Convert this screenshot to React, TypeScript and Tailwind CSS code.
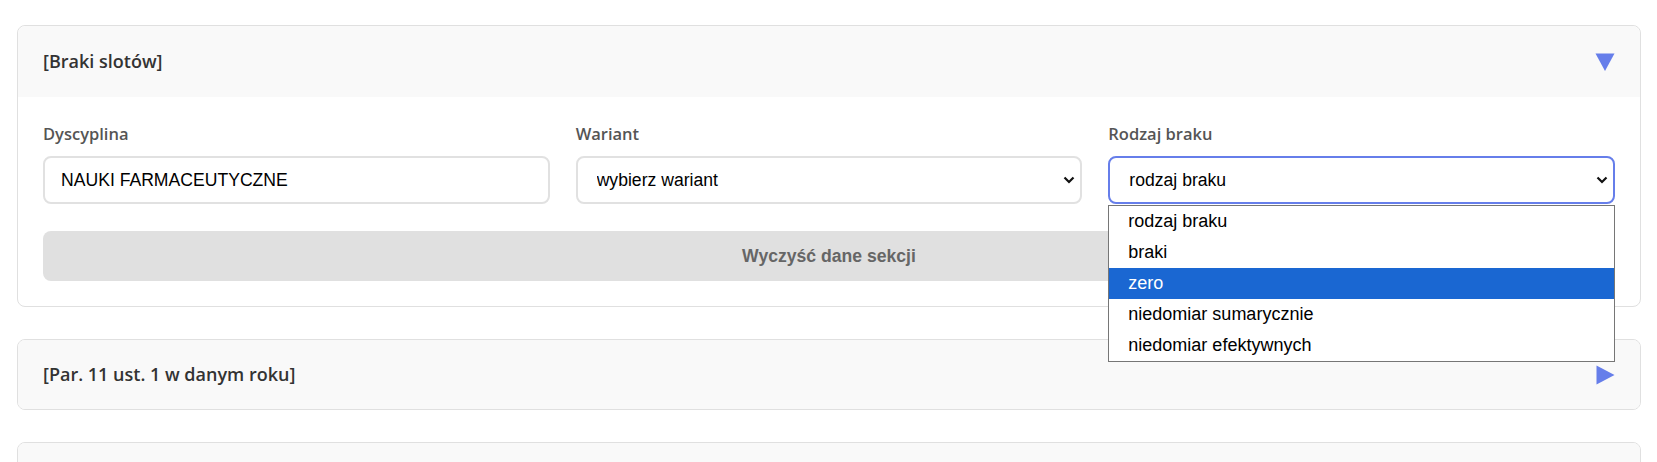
import React from "react";

const options = [
  "rodzaj braku",
  "braki",
  "zero",
  "niedomiar sumarycznie",
  "niedomiar efektywnych",
];

const arial = { fontFamily: '"Liberation Sans", Arial, sans-serif' };

// Strzałka natywnego selecta
function Chevron() {
  return (
    <svg
      className="pointer-events-none absolute right-[7px] top-1/2 -translate-y-1/2"
      width="12"
      height="8"
      viewBox="0 0 12 8"
    >
      <path d="M1.5 1.5 L6 6 L10.5 1.5" fill="none" stroke="#111" strokeWidth="2.2" />
    </svg>
  );
}

function Field({
  label,
  children,
}: {
  label: string;
  children: React.ReactNode;
}) {
  return (
    <div className="flex flex-col">
      <label className="mb-[10px] h-6 text-[16.5px] font-semibold leading-6 text-[#555]">
        {label}
      </label>
      {children}
    </div>
  );
}

function SectionHeader({
  title,
  open,
  h,
}: {
  title: string;
  open: boolean;
  h: string;
}) {
  return (
    <div className={"flex items-center justify-between bg-[#f9f9f9] px-[25px] " + h}>
      <h3 className="text-[18px] font-semibold text-[#333]">{title}</h3>
      {open ? (
        <svg width="20" height="18" viewBox="0 0 20 18">
          <polygon points="0.5,0.5 19.5,0.5 10,18" fill="#667eea" />
        </svg>
      ) : (
        <svg width="19" height="20" viewBox="0 0 19 20">
          <polygon points="0.5,0.5 18.5,10 0.5,19.5" fill="#667eea" />
        </svg>
      )}
    </div>
  );
}

export default function App() {
  const inputCls =
    "h-[48px] w-full rounded-lg border-2 border-[#e1e1e1] bg-white px-4 text-[17.6px] text-black outline-none";

  return (
    <div
      className="h-[462px] overflow-hidden bg-white pl-[17px] pr-4 pt-[25px]"
      style={{ fontFamily: '"Open Sans", "Noto Sans", sans-serif' }}
    >
      {/* Sekcja: braki slotów */}
      <div className="mb-8 rounded-lg border border-[#e0e0e0] bg-white">
        <div className="overflow-hidden rounded-t-lg">
          <SectionHeader title="[Braki slotów]" open h="h-[71px]" />
        </div>
        <div className="px-[25px] pb-[25px] pt-[25px]">
          <div className="grid grid-cols-3 gap-[26px]">
            <Field label="Dyscyplina">
              <input
                className={inputCls}
                style={arial}
                defaultValue="NAUKI FARMACEUTYCZNE"
                readOnly
              />
            </Field>
            <Field label="Wariant">
              <div className="relative">
                <select
                  className={inputCls + " appearance-none pl-[19px]"}
                  style={arial}
                  defaultValue=""
                >
                  <option value="">wybierz wariant</option>
                </select>
                <Chevron />
              </div>
            </Field>
            <Field label="Rodzaj braku">
              <div className="relative">
                <select
                  className="h-[48px] w-full appearance-none rounded-lg border-2 border-[#667eea] bg-white pl-[19px] text-[17.6px] text-black outline-none"
                  style={arial}
                  defaultValue="rodzaj braku"
                >
                  {options.map((o) => (
                    <option key={o}>{o}</option>
                  ))}
                </select>
                <Chevron />
                {/* rozwinięta lista */}
                <ul
                  className="absolute left-0 right-0 top-full z-10 mt-px border border-[#767676] bg-white"
                  style={arial}
                >
                  {options.map((o) => (
                    <li
                      key={o}
                      className={
                        "flex h-[31px] items-center pl-[19px] text-[18px] " +
                        (o === "zero" ? "bg-[#1a67d2] text-white" : "text-black")
                      }
                    >
                      {o}
                    </li>
                  ))}
                </ul>
              </div>
            </Field>
          </div>
          <button
            className="mt-[27px] h-[50px] w-full rounded-lg bg-[#e0e0e0] text-[17.6px] font-bold text-[#666]"
            style={arial}
          >
            Wyczyść dane sekcji
          </button>
        </div>
      </div>

      {/* Sekcja: par. 11 */}
      <div className="mb-8 overflow-hidden rounded-lg border border-[#e0e0e0]">
        <SectionHeader title="[Par. 11 ust. 1 w danym roku]" open={false} h="h-[69px]" />
      </div>

      <div className="overflow-hidden rounded-lg border border-[#e0e0e0]">
        <SectionHeader title="" open={false} h="h-[69px]" />
      </div>
    </div>
  );
}
